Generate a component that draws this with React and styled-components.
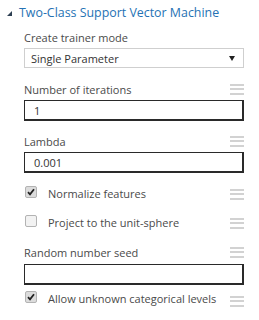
import React from 'react';
import styled, { createGlobalStyle } from 'styled-components';

const Global = createGlobalStyle`
  body {
    margin: 0;
    background: #fff;
    font-family: "Open Sans", "Noto Sans", sans-serif;
  }
`;

const Panel = styled.div`
  width: 259px;
  height: 320px;
  padding-top: 3px;
  box-sizing: border-box;
  background: #fff;
`;

const Header = styled.div`
  display: flex;
  align-items: center;
  height: 18px;
  padding-left: 7px;
`;

const Caret = styled.span`
  width: 0;
  height: 0;
  border-left: 5px solid transparent;
  border-bottom: 5px solid #2d3f52;
  margin-right: 7px;
  margin-top: 2px;
`;

const Title = styled.div`
  font-size: 12.4px;
  color: #2572b4;
  white-space: nowrap;
`;

const Body = styled.div`
  display: flex;
  flex-direction: column;
  padding: 0 15px 0 24px;
`;

const LabelRow = styled.div`
  display: flex;
  align-items: center;
  justify-content: space-between;
  height: 16px;
  margin-top: ${p => p.$top}px;
  font-size: 11px;
  color: #4a4a4a;
`;

const Select = styled.div`
  display: flex;
  align-items: center;
  justify-content: space-between;
  height: 20px;
  margin-top: 3px;
  padding: 0 8px 0 6px;
  border: 1px solid #cfcfcf;
  font-size: 11px;
  color: #333;
  box-sizing: border-box;
`;

const Arrow = styled.span`
  width: 0;
  height: 0;
  border-left: 3px solid transparent;
  border-right: 3px solid transparent;
  border-top: 5px solid #222;
`;

const Input = styled.div`
  display: flex;
  align-items: center;
  height: 21px;
  margin-top: ${p => p.$top}px;
  padding-left: 9px;
  border: 1px solid #2a2a2a;
  border-right-width: 2px;
  border-bottom-width: 2px;
  font-size: 11px;
  color: #333;
  box-sizing: border-box;
`;

const CheckRow = styled.div`
  display: flex;
  align-items: center;
  height: 16px;
  margin-top: ${p => p.$top}px;
  font-size: 11px;
  color: #4a4a4a;
`;

const Box = styled.span`
  display: flex;
  align-items: center;
  justify-content: center;
  width: 10px;
  height: 10px;
  margin: -3px 11px 0 1px;
  border: 1px solid #b3b3b3;
  border-radius: 2px;
  background: ${p => (p.$on ? '#dcdcdc' : '#f2f2f2')};
`;

const CheckText = styled.span`
  flex: 1;
  white-space: nowrap;
`;

const Grip = styled.span`
  display: flex;
  flex-direction: column;
  gap: 2.5px;
  width: 14px;
  margin-top: ${p => p.$top || 0}px;
  span {
    height: 2px;
    background: #d2d2d2;
  }
`;

const Handle = ({ top }) => (
  <Grip $top={top}>
    <span />
    <span />
    <span />
  </Grip>
);

const Check = ({ on }) => (
  <Box $on={on}>
    {on && (
      <svg width="8" height="8" viewBox="0 0 8 8">
        <path d="M1 4.2 L3 6.3 L7 1.3" fill="none" stroke="#222" strokeWidth="1.8" />
      </svg>
    )}
  </Box>
);

export default function App() {
  return (
    <Panel>
      <Global />
      <Header>
        <Caret />
        <Title>Two-Class Support Vector Machine</Title>
      </Header>
      <Body>
        <LabelRow $top={8}>Create trainer mode</LabelRow>
        <Select>
          Single Parameter
          <Arrow />
        </Select>

        <LabelRow $top={13}>
          Number of iterations
          <Handle />
        </LabelRow>
        <Input $top={3}>1</Input>

        <LabelRow $top={12}>
          Lambda
          <Handle />
        </LabelRow>
        <Input $top={3}>0.001</Input>

        <CheckRow $top={12}>
          <Check on />
          <CheckText>Normalize features</CheckText>
          <Handle top={2} />
        </CheckRow>
        <CheckRow $top={13}>
          <Check />
          <CheckText>Project to the unit-sphere</CheckText>
          <Handle top={2} />
        </CheckRow>

        <LabelRow $top={14}>
          Random number seed
          <Handle />
        </LabelRow>
        <Input $top={4} />

        <CheckRow $top={5}>
          <Check on />
          <CheckText>Allow unknown categorical levels</CheckText>
          <Handle top={6} />
        </CheckRow>
      </Body>
    </Panel>
  );
}
